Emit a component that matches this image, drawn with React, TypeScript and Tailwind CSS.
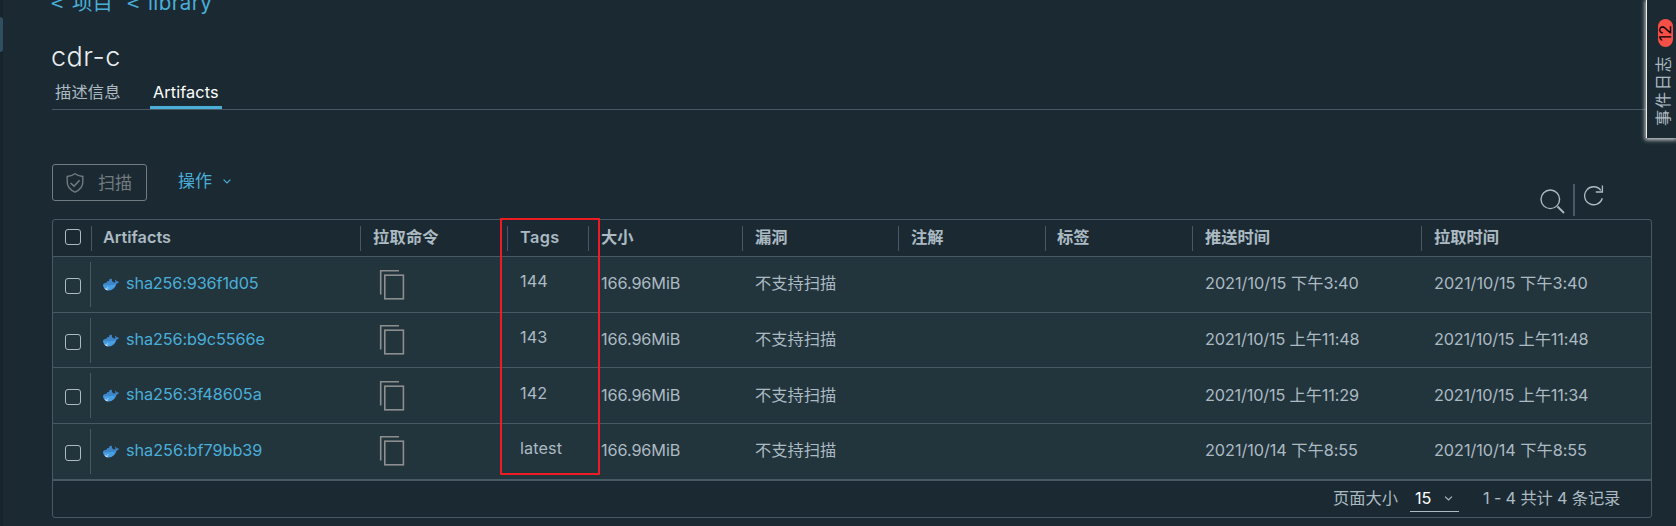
import React from "react";

const COLS = "grid grid-cols-[38px_269px_147px_81px_154px_156px_147px_147px_229px_230px]";

const rows = [
  { id: "sha256:936f1d05", tag: "144", pushed: "2021/10/15 下午3:40", pulled: "2021/10/15 下午3:40", h: "h-14", line: "leading-[53px]", tagLine: "leading-[49px]", copyPad: "pt-3", tracking: "tracking-[-0.15px]", dates: "tracking-[-0.03px]" },
  { id: "sha256:b9c5566e", tag: "143", pushed: "2021/10/15 上午11:48", pulled: "2021/10/15 上午11:48", h: "h-[55px]", line: "leading-[53px]", tagLine: "leading-[49px]", copyPad: "pt-[11px]", tracking: "tracking-[-0.12px]", dates: "tracking-[-0.16px]" },
  { id: "sha256:3f48605a", tag: "142", pushed: "2021/10/15 上午11:29", pulled: "2021/10/15 上午11:34", h: "h-14", line: "leading-[55px]", tagLine: "leading-[51px]", copyPad: "pt-3", tracking: "tracking-[-0.07px]", dates: "tracking-[-0.16px]" },
  { id: "sha256:bf79bb39", tag: "latest", pushed: "2021/10/14 下午8:55", pulled: "2021/10/14 下午8:55", h: "h-14", line: "leading-[53px]", tagLine: "leading-[49px]", copyPad: "pt-[11px]", tracking: "tracking-[-0.04px]", dates: "tracking-[-0.06px]" },
];

const headers = [
  { label: "Artifacts", pad: "pl-[11px]" },
  { label: "拉取命令", pad: "pl-3 tracking-[0.2px]" },
  { label: "Tags", pad: "pl-3 tracking-[0.4px]" },
  { label: "大小", pad: "pl-3" },
  { label: "漏洞", pad: "pl-3" },
  { label: "注解", pad: "pl-3" },
  { label: "标签", pad: "pl-[11px]" },
  { label: "推送时间", pad: "pl-3" },
  { label: "拉取时间", pad: "pl-3" },
];

function Checkbox() {
  return <span className="block size-4 rounded-[3px] border border-[#acbac3]" />;
}

function Chevron({ className }: { className: string }) {
  return (
    <svg viewBox="0 0 8 5" className={className} fill="none" stroke="currentColor" strokeWidth="1.2">
      <path d="M0.6 0.6 L4 4 L7.4 0.6" />
    </svg>
  );
}

function Whale() {
  return (
    <svg viewBox="0 0 16 13" className="mt-0.5 h-[13px] w-4 shrink-0">
      <path d="M0 6.3 Q1.2 5.2 3.2 4.8 L4.4 3.2 L6 2.9 L6.6 1 L8.8 0.8 L9 2.9 L10.6 4.4 Q12 4.6 12.5 3.8 Q11.8 2.6 12.5 1.6 Q13.4 2 13.7 3.4 Q14.8 3 16 3.7 Q15.4 5.3 13.5 5.8 Q12.4 10.2 8.2 12 Q4.6 13 2.2 11.3 Q0 9.6 0 6.3Z" fill="#3f86c8" />
      <path d="M0.2 7 Q6 7.6 12.9 6.6 Q11.4 10.6 7.8 11.9 Q4.4 12.8 2.2 11.2 Q0.4 9.6 0.2 7Z" fill="#46a0e4" />
      <path d="M1.4 10.2 Q3.8 9.8 5.4 12.4 Q3 12.4 1.4 10.2Z" fill="#d5e6f2" />
      <circle cx="4.8" cy="9.9" r="0.6" fill="#d5e6f2" />
    </svg>
  );
}

function CopyIcon() {
  return (
    <svg viewBox="0 0 26 32" className="h-8 w-[26px]" fill="none" stroke="#8d8f8f" strokeWidth="1.6">
      <path d="M1.7 25.5 V1.7 H20" />
      <rect x="5.8" y="6.2" width="18.6" height="23.6" />
    </svg>
  );
}

export default function App() {
  return (
    <div className="relative flex h-[526px] w-[1676px] overflow-hidden bg-[#1b2a32] font-[Inter,'Noto_Sans_CJK_SC',sans-serif] text-[16.25px] leading-6 whitespace-nowrap text-[#acbac3]">
      <aside className="h-full w-[3px] shrink-0 bg-[#17242b] pt-[17px]">
        <div className="h-[35px] rounded-r bg-[#314f61]" />
      </aside>
      <main className="flex w-[1649px] flex-col pl-[49px]">
        <nav className="-mt-3 flex h-[30px] items-center text-[20.5px] leading-[30px] text-[#4aaed9]">
          <span className="-ml-0.5 w-[22px] font-['DejaVu_Sans'] text-[17px]">&lt;</span>
          <span className="w-[54px]">项目</span>
          <span className="w-[22px] font-['DejaVu_Sans'] text-[17px]">&lt;</span>
          <span className="tracking-[0.4px]">library</span>
        </nav>
        <h1 className="mt-[23px] -ml-px h-8 text-[27px] leading-8 font-light tracking-[0.5px] text-[#eaedf0]">cdr-c</h1>
        <div className="mt-[7px] flex h-[30px] border-b border-[#495865]">
          <div className="w-[98px] pl-[3px] leading-6 tracking-[0.15px]">描述信息</div>
          <div className="h-[29px] w-[72px] border-b-[3px] border-[#4aaed9] pl-[3px] leading-6 tracking-[0.1px] text-white">Artifacts</div>
        </div>

        <div className="flex h-[109px] justify-between">
          <div className="flex pt-[54px]">
            <button className="flex h-[37px] w-[95px] items-center rounded-[3px] border border-[#717b80] pl-[13px] text-[17px] text-[#717b80]">
              <svg viewBox="0 0 18 20" className="mr-[14px] h-5 w-[18px]" fill="none" stroke="currentColor" strokeWidth="1.4">
                <path d="M9 0.8 Q12.5 3.3 16.8 3.5 V9 Q16.8 15.5 9 19.2 Q1.2 15.5 1.2 9 V3.5 Q5.5 3.3 9 0.8Z" />
                <path d="M4.6 10 L8 13.2 L13.6 7.2" strokeWidth="1.6" />
              </svg>
              扫描
            </button>
            <div className="flex h-[34px] items-center pl-[31px] text-[17px] text-[#4aaed9]">
              操作
              <Chevron className="mt-px ml-[11px] h-[5px] w-2" />
            </div>
          </div>
          <div className="flex items-start pt-[74px] pr-[48px] text-[#acbac3]">
            <svg viewBox="0 0 25 25" className="mt-[5px] mr-2 h-[25px] w-[25px]" fill="none" stroke="currentColor" strokeWidth="1.4">
              <circle cx="10.3" cy="10.3" r="9.3" />
              <path d="M17.5 17.5 L24 24" strokeWidth="1.8" />
            </svg>
            <span className="h-8 w-0.5 bg-[#495865]" />
            <svg viewBox="0 0 20 21" className="mt-px ml-[9px] h-[21px] w-5" fill="none" stroke="currentColor" strokeWidth="1.3">
              <path d="M18.3 13.2 A9 9 0 1 1 16.9 5.4" />
              <path d="M18.4 0.6 V7 H11.8" />
            </svg>
          </div>
        </div>

        <section className="relative h-[299px] w-[1600px] rounded-[3px] border border-[#495865]">
          <div className={`${COLS} h-[37px] border-b border-[#495865] pt-1.5 font-semibold`}>
            <div className="pt-[3px] pl-3"><Checkbox /></div>
            {headers.map((h) => (
              <div key={h.label} className={`h-[25px] border-l border-[#495865] leading-[23px] ${h.pad}`}>{h.label}</div>
            ))}
          </div>
          {rows.map((r) => (
            <div key={r.id} className={`${COLS} ${r.h} border-b border-[#495865] bg-[#22343c]`}>
              <div className="flex pt-[21px] pl-3">
                <Checkbox />
                <span className="-mt-4 ml-[9px] h-[45px] w-px bg-[#495865]" />
              </div>
              <div className="flex h-[53px] items-center pl-3">
                <Whale />
                <span className={`-mt-px ml-[7px] text-[#4aaed9] ${r.tracking}`}>{r.id}</span>
              </div>
              <div className={`pl-[19px] ${r.copyPad}`}><CopyIcon /></div>
              <div className={`pl-[13px] tracking-[0.1px] ${r.tagLine}`}>{r.tag}</div>
              <div className={`pl-[13px] tracking-[-0.1px] ${r.line}`}>166.96MiB</div>
              <div className={`pl-[13px] ${r.line}`}>不支持扫描</div>
              <div />
              <div />
              <div className={`pl-[13px] ${r.line} ${r.dates}`}>{r.pushed}</div>
              <div className={`pl-[13px] ${r.line} ${r.dates}`}>{r.pulled}</div>
            </div>
          ))}
          <footer className="flex h-[38px] border-t border-[#495865] pl-[1280px] leading-[35px]">
            <span className="w-[77px]">页面大小</span>
            <span className="flex h-[31px] w-[49px] items-center border-b border-[#acbac3] pt-[5px] pl-[5px] text-white">
              <span className="w-[29px]">15</span>
              <Chevron className="h-[5px] w-[9px] text-[#acbac3]" />
            </span>
            <span className="pl-6 tracking-[-0.15px]">1 - 4 共计 4 条记录</span>
          </footer>
          <div className="pointer-events-none absolute -top-[2px] left-[447px] h-[257px] w-[100px] border-2 border-[#ed1c24]" />
        </section>
      </main>
      <aside className="absolute top-0 right-0 flex h-[138px] w-[30px] flex-col items-start border-l border-[#e8eaeb] bg-[#1b2a32] pt-[19px] shadow-[0_1px_4px_1px_#cccccc]">
        <span className="ml-[11px] flex h-7 w-[15px] items-center justify-center rounded-full bg-[#f54f47] text-[16px] text-black">
          <span className="-rotate-90">12</span>
        </span>
        <span className="mt-[7px] ml-2 h-[72px] w-4 rotate-180 text-[16.25px] leading-4 tracking-[1.6px] [writing-mode:vertical-rl] [text-orientation:sideways]">事件日志</span>
      </aside>
    </div>
  );
}
